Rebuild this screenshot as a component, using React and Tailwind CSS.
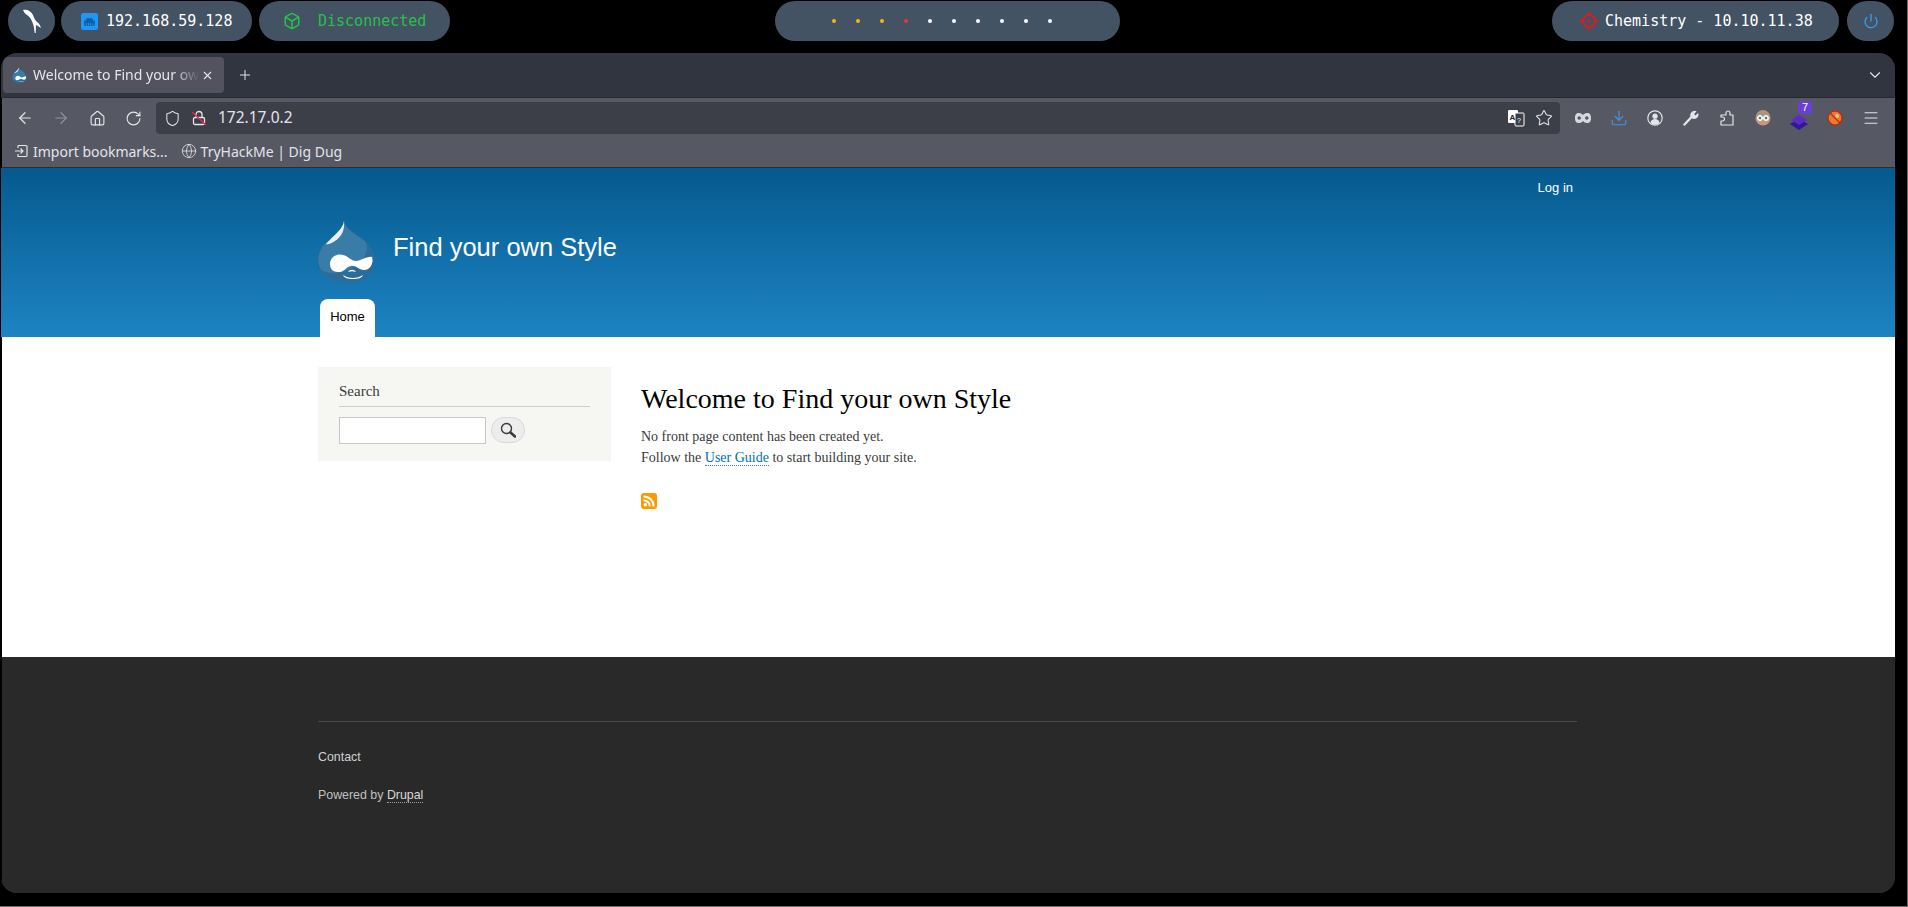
import { Box, Power, ArrowLeft, ArrowRight, Home, RotateCw, Shield, Star, Download, Menu, ChevronDown, Plus, X, Globe } from 'lucide-react';

const mono = { fontFamily: '"DejaVu Sans Mono", monospace' };

function DrupalDrop({ className }) {
  return (
    <svg viewBox="0 0 57 63" className={className}>
      <path d="M26 0c1 9 11 13 20 20 7 6 11 13 11 21 0 13-12 22-28 22S0 54 0 40c0-9 5-16 12-21C19 14 25 9 26 0z" fill="#3a7ca8" stroke="#2b668f" strokeWidth="0.6" />
      <path d="M48 22c6 5 9 12 9 19 0 13-12 22-28 22-12 0-21-5-26-13 8 4 19 4 29-1 12-5 19-15 16-27z" fill="#2a6c9b" />
      <path d="M26 1C25 9 17 14 8 24c2 1 6-1 9-3 6-4 10-10 9-20z" fill="#e8f1f6" />
      <path d="M12 44c0-7 7-11 13-9 5 1 8 6 13 6s11-5 16-4c2 6-2 14-9 13-5-1-8-5-12-4-5 1-8 7-13 6-5 0-8-3-8-8z" fill="#fff" />
      <path d="M25 55c6 4 14 4 20 0-1 3-5 4-10 4s-9-1-10-4z" fill="#fff" />
      <path d="M30 52c2-3 6-3 8 0-3-1-5-1-8 0z" fill="#fff" />
    </svg>
  );
}

function Pill({ className, children }) {
  return <div className={`flex h-10 items-center rounded-[20px] bg-[#435364] ${className}`}>{children}</div>;
}

function ToolIcon({ children, className = '' }) {
  return <div className={`flex h-8 w-9 shrink-0 items-center justify-center ${className}`}>{children}</div>;
}

export default function App() {
  const dots = ['bg-[#f5b70a]', 'bg-[#f5b70a]', 'bg-[#f5b70a]', 'bg-[#e8363a]', 'bg-white', 'bg-white', 'bg-white', 'bg-white', 'bg-white', 'bg-white'];

  return (
    <div className="h-[907px] w-full overflow-hidden border-r border-b border-[#6b6b6b] bg-black" style={{ fontFamily: '"Liberation Sans", sans-serif' }}>
      {/* top bar */}
      <div className="flex pt-px pl-2 pr-[13px] text-[15px]" style={mono}>
        <Pill className="w-[47px] justify-center">
          <svg viewBox="0 0 20 24" className="h-[24px] w-[20px]">
            <path d="M1 1c4-1 8 1 10 5 1 3 2 5 4 7 2 1 3 3 4 6l-3-2-2-1-.3 8-1 0-1-7C10 11 8 8 5 6 3 5 2 3 1 1z" fill="#fff" />
          </svg>
        </Pill>
        <Pill className="ml-1.5 w-[191px] pl-5 text-white">
          <svg viewBox="0 0 16 16" className="mr-2 h-[17px] w-[17px]">
            <rect width="16" height="16" rx="2" fill="#2196f3" />
            <path d="M3 12V7h2V5h6v2h2v5z" fill="#0f5ea8" />
            <path d="M5 9.5v2M7 9.5v2M9 9.5v2M11 9.5v2" stroke="#2196f3" strokeWidth="0.8" />
          </svg>
          192.168.59.128
        </Pill>
        <Pill className="ml-[7px] w-[191px] pl-6 text-[#28c04c]">
          <Box size={18} className="mr-[17px]" />
          Disconnected
        </Pill>
        <Pill className="ml-[325px] w-[345px] pl-[57px] gap-5">
          {dots.map((d, i) => (
            <span key={i} className={`h-1 w-1 rounded-full ${d}`} />
          ))}
        </Pill>
        <Pill className="ml-auto w-[287px] pl-7 text-white">
          <svg viewBox="0 0 18 18" className="mr-[7px] h-[18px] w-[18px]" fill="none" stroke="#e01b1b" strokeWidth="1.8">
            <circle cx="9" cy="9" r="6" />
            <path d="M9 0v4M9 14v4M0 9h4M14 9h4" />
            <path d="M9 7.5v3M7.5 9h3" strokeWidth="1" />
          </svg>
          Chemistry - 10.10.11.38
        </Pill>
        <Pill className="ml-2 w-[47px] justify-center">
          <Power size={16} className="text-[#3b9ae8]" />
        </Pill>
      </div>

      {/* browser window */}
      <div className="mt-3 ml-px flex h-[840px] w-[1894px] flex-col overflow-hidden rounded-2xl bg-[#292929]">
        <div className="flex h-[45px] shrink-0 items-center border-b border-[#262932] bg-[#31353f] pl-[2px] pr-[11px] text-[#e4e4ea]" style={{ fontFamily: '"Noto Sans", sans-serif' }}>
          <div className="flex h-9 w-[221px] items-center rounded bg-[#52535f] pl-[9px]">
            <DrupalDrop className="h-[16px] w-[15px]" />
            <div className="ml-[6px] w-[166px] overflow-hidden whitespace-nowrap pb-[2px] text-[14px]" style={{ maskImage: 'linear-gradient(to right, black 85%, transparent)' }}>Welcome to Find your own Style</div>
            <X size={13} className="ml-[2px]" />
          </div>
          <Plus size={16} strokeWidth={1.5} className="ml-[13px]" />
          <ChevronDown size={18} strokeWidth={1.5} className="ml-auto" />
        </div>

        <div className="flex h-[37px] shrink-0 items-start border-l border-black bg-[#565863] pt-1 text-[#e4e4ea]">
          <div className="flex w-[154px] shrink-0 items-center pl-[5px]">
            <ToolIcon><ArrowLeft size={18} strokeWidth={1.6} /></ToolIcon>
            <ToolIcon><ArrowRight size={18} strokeWidth={1.6} className="text-[#8f919b]" /></ToolIcon>
            <ToolIcon><Home size={17} strokeWidth={1.6} /></ToolIcon>
            <ToolIcon><RotateCw size={17} strokeWidth={1.6} /></ToolIcon>
          </div>
          <div className="flex h-8 w-[1404px] shrink-0 items-center rounded bg-[#3d3f48] pl-2 pr-[7px]">
            <Shield size={17} strokeWidth={1.5} />
            <div className="relative ml-[10px] h-4 w-4">
              <svg viewBox="0 0 16 16" className="h-4 w-4" fill="none" stroke="currentColor" strokeWidth="1.3">
                <rect x="2.5" y="7.5" width="11" height="7" rx="1.5" />
                <path d="M5 7.5V4.5a3 3 0 016 0v3" />
                <path d="M1 2l14 13" stroke="#e8284a" />
              </svg>
            </div>
            <span className="ml-[11px] text-[15.5px]" style={{ fontFamily: '"Noto Sans", sans-serif' }}>172.17.0.2</span>
            <svg viewBox="0 0 18 18" className="ml-auto h-[18px] w-[18px]">
              <rect x="1" y="1" width="10" height="13" rx="1" fill="#fff" />
              <rect x="8" y="4" width="9" height="13" rx="1" fill="#3d3f48" stroke="#fff" />
              <text x="2.5" y="10.5" fontSize="8" fontWeight="700" fill="#222">A</text>
              <text x="10" y="13.5" fontSize="7" fill="#fff">?</text>
            </svg>
            <Star size={18} strokeWidth={1.4} className="ml-[10px]" />
          </div>
          <div className="flex flex-1 items-center pl-[5px]">
            <ToolIcon>
              <svg viewBox="0 0 16 10" className="h-[10px] w-4">
                <path d="M4 0c2 0 3 1 4 2 1-1 2-2 4-2 3 0 4 2 4 5s-1 5-4 5c-2 0-3-1-4-2-1 1-2 2-4 2-3 0-4-2-4-5s1-5 4-5z" fill="#d8d9e0" />
                <circle cx="4.2" cy="5" r="1.8" fill="#565863" />
                <circle cx="11.8" cy="5" r="1.8" fill="#565863" />
              </svg>
            </ToolIcon>
            <ToolIcon><Download size={18} strokeWidth={1.6} className="text-[#4a90e2]" /></ToolIcon>
            <ToolIcon>
              <svg viewBox="0 0 16 16" className="h-4 w-4" fill="currentColor">
                <circle cx="8" cy="8" r="7.2" fill="none" stroke="currentColor" strokeWidth="1.2" />
                <circle cx="8" cy="6.2" r="2.6" />
                <path d="M3.5 13a4.5 4 0 019 0 6.5 6.5 0 01-9 0z" />
              </svg>
            </ToolIcon>
            <ToolIcon>
              <svg viewBox="0 0 16 16" className="h-4 w-4" fill="currentColor">
                <path d="M1.5 14.5L8.5 7" stroke="currentColor" strokeWidth="2.4" strokeLinecap="round" />
                <path d="M8.5 8a4.3 4.3 0 015.2-6.7l-2.6 2.6 1.3 1.5 2.7-2.5A4.3 4.3 0 018.5 8z" />
              </svg>
            </ToolIcon>
            <ToolIcon>
              <svg viewBox="0 0 16 16" className="h-4 w-4" fill="none" stroke="currentColor" strokeWidth="1.2" strokeLinejoin="round">
                <path d="M7 3a2 2 0 014 0v2h3v10H2v-4h1.5a2 2 0 000-4H2V5h5z" />
              </svg>
            </ToolIcon>
            <ToolIcon>
              <svg viewBox="0 0 16 16" className="h-4 w-4">
                <circle cx="8" cy="8" r="7.5" fill="#c79a7c" />
                <path d="M1 7a7 7 0 0114 0z" fill="#a89878" />
                <circle cx="5" cy="8" r="2.5" fill="#cfe5ea" stroke="#fff" />
                <circle cx="11" cy="8" r="2.5" fill="#cfe5ea" stroke="#fff" />
                <circle cx="5" cy="8" r="1" fill="#446" />
                <circle cx="11" cy="8" r="1" fill="#446" />
              </svg>
            </ToolIcon>
            <ToolIcon className="relative">
              <svg viewBox="0 0 18 16" className="mt-2 h-4 w-[18px]">
                <path d="M9 5l9 5-9 6-9-6z" fill="#341796" />
                <path d="M9 1l8 5-8 5-8-5z" fill="#5b2bc9" />
              </svg>
              <span className="absolute top-[-1px] right-[5px] flex h-[13px] w-[14px] items-center justify-center rounded-sm bg-[#6b3fd4] text-[11px] text-white">7</span>
            </ToolIcon>
            <ToolIcon>
              <svg viewBox="0 0 16 16" className="h-4 w-4">
                <circle cx="8" cy="8" r="6.8" fill="#e0812a" />
                <circle cx="10" cy="6" r="2" fill="#f3c07a" />
                <circle cx="8" cy="8" r="7" fill="none" stroke="#d11d1d" strokeWidth="1.2" />
                <path d="M3 3l10 10" stroke="#d11d1d" strokeWidth="1.2" />
              </svg>
            </ToolIcon>
            <ToolIcon><Menu size={18} strokeWidth={1.4} /></ToolIcon>
          </div>
        </div>

        <div className="flex h-[33px] shrink-0 items-center border-b border-l border-b-[#2b2d35] border-l-black bg-[#565863] pl-3 text-[14px] text-[#e4e4ea]" style={{ fontFamily: '"Noto Sans", sans-serif' }}>
          <svg viewBox="0 0 14 14" className="h-[14px] w-[14px]" fill="none" stroke="currentColor" strokeWidth="1.2">
            <path d="M4 1.5h8a1 1 0 011 1v9a1 1 0 01-1 1H4V10" />
            <path d="M1 7h8M6.5 4.5L9 7l-2.5 2.5" />
            <path d="M4 4V1.5" />
          </svg>
          <span className="ml-[5px]">Import bookmarks...</span>
          <Globe size={16} strokeWidth={1.2} className="ml-[13px]" />
          <span className="ml-[4px]">TryHackMe | Dig Dug</span>
        </div>

        {/* drupal page */}
        <div className="flex h-[169px] shrink-0 flex-col bg-gradient-to-b from-[#055a8e] to-[#1d84c3] pl-[317px] text-white">
          <div className="flex w-[1259px] justify-end pt-[12px] pr-[4px] text-[13px] leading-[16px]">Log in</div>
          <div className="mt-[24px] flex h-[63px] items-center">
            <DrupalDrop className="h-[63px] w-[57px]" />
            <span className="mb-[10px] ml-[18px] text-[25.5px] leading-[30px]">Find your own Style</span>
          </div>
          <div className="ml-[2px] mt-auto flex h-[38px] w-[55px] items-center justify-center rounded-t-lg bg-white pb-[3px] text-[13px] text-black">Home</div>
        </div>

        <div className="flex h-[320px] shrink-0 border-l border-black bg-white pl-[316px] pt-[30px] text-[14px] text-[#3b3b3b]" style={{ fontFamily: '"Liberation Serif", serif' }}>
          <div className="h-[94px] w-[293px] bg-[#f6f6f2] px-[21px] pt-[15px]">
            <div className="border-b border-[#cccccc] pb-[5px] text-[15px] leading-[19px]">Search</div>
            <div className="mt-[10px] flex items-start">
              <div className="h-[27px] w-[147px] border border-[#c8c8c8] bg-white" />
              <div className="ml-[5px] flex h-[26px] w-[34px] items-center justify-center rounded-[13px] border border-[#d8d8d8] bg-[#ededed]">
                <svg viewBox="0 0 16 16" className="h-4 w-4" fill="none" stroke="#3a3a3a">
                  <circle cx="6.5" cy="6.5" r="5" strokeWidth="1.4" />
                  <path d="M10.5 10.5l4.5 4" strokeWidth="2.6" strokeLinecap="round" />
                </svg>
              </div>
            </div>
          </div>
          <div className="ml-[30px] pt-[15px]">
            <h1 className="text-[28px] leading-[34px] text-black">Welcome to Find your own Style</h1>
            <p className="mt-[10px] leading-[21px]">No front page content has been created yet.<br />Follow the <span className="border-b border-dotted border-[#1d84c3] text-[#0071b3]">User Guide</span> to start building your site.</p>
            <div className="mt-[25px] h-4 w-4">
              <svg viewBox="0 0 16 16" className="h-4 w-4">
                <rect width="16" height="16" rx="3" fill="#ff9900" />
                <circle cx="4.3" cy="11.7" r="1.7" fill="#fff" />
                <path d="M2.6 7.2a6.2 6.2 0 016.2 6.2M2.6 3.4a10 10 0 0110 10" fill="none" stroke="#fff" strokeWidth="2" />
              </svg>
            </div>
          </div>
        </div>

        <div className="flex-1 border-l border-black bg-[#292929] pl-[316px] pt-[64px] text-[12.4px] text-[#c0c0c0]">
          <div className="w-[1259px] border-t border-[#4a4a4a] pt-[25px]">
            <div className="leading-[20px] text-[#d0d0d0]">Contact</div>
            <div className="mt-[18px] leading-[20px]">Powered by <span className="border-b border-dotted border-[#a0a0a0] text-[#d8d8d8]">Drupal</span></div>
          </div>
        </div>
      </div>
    </div>
  );
}
